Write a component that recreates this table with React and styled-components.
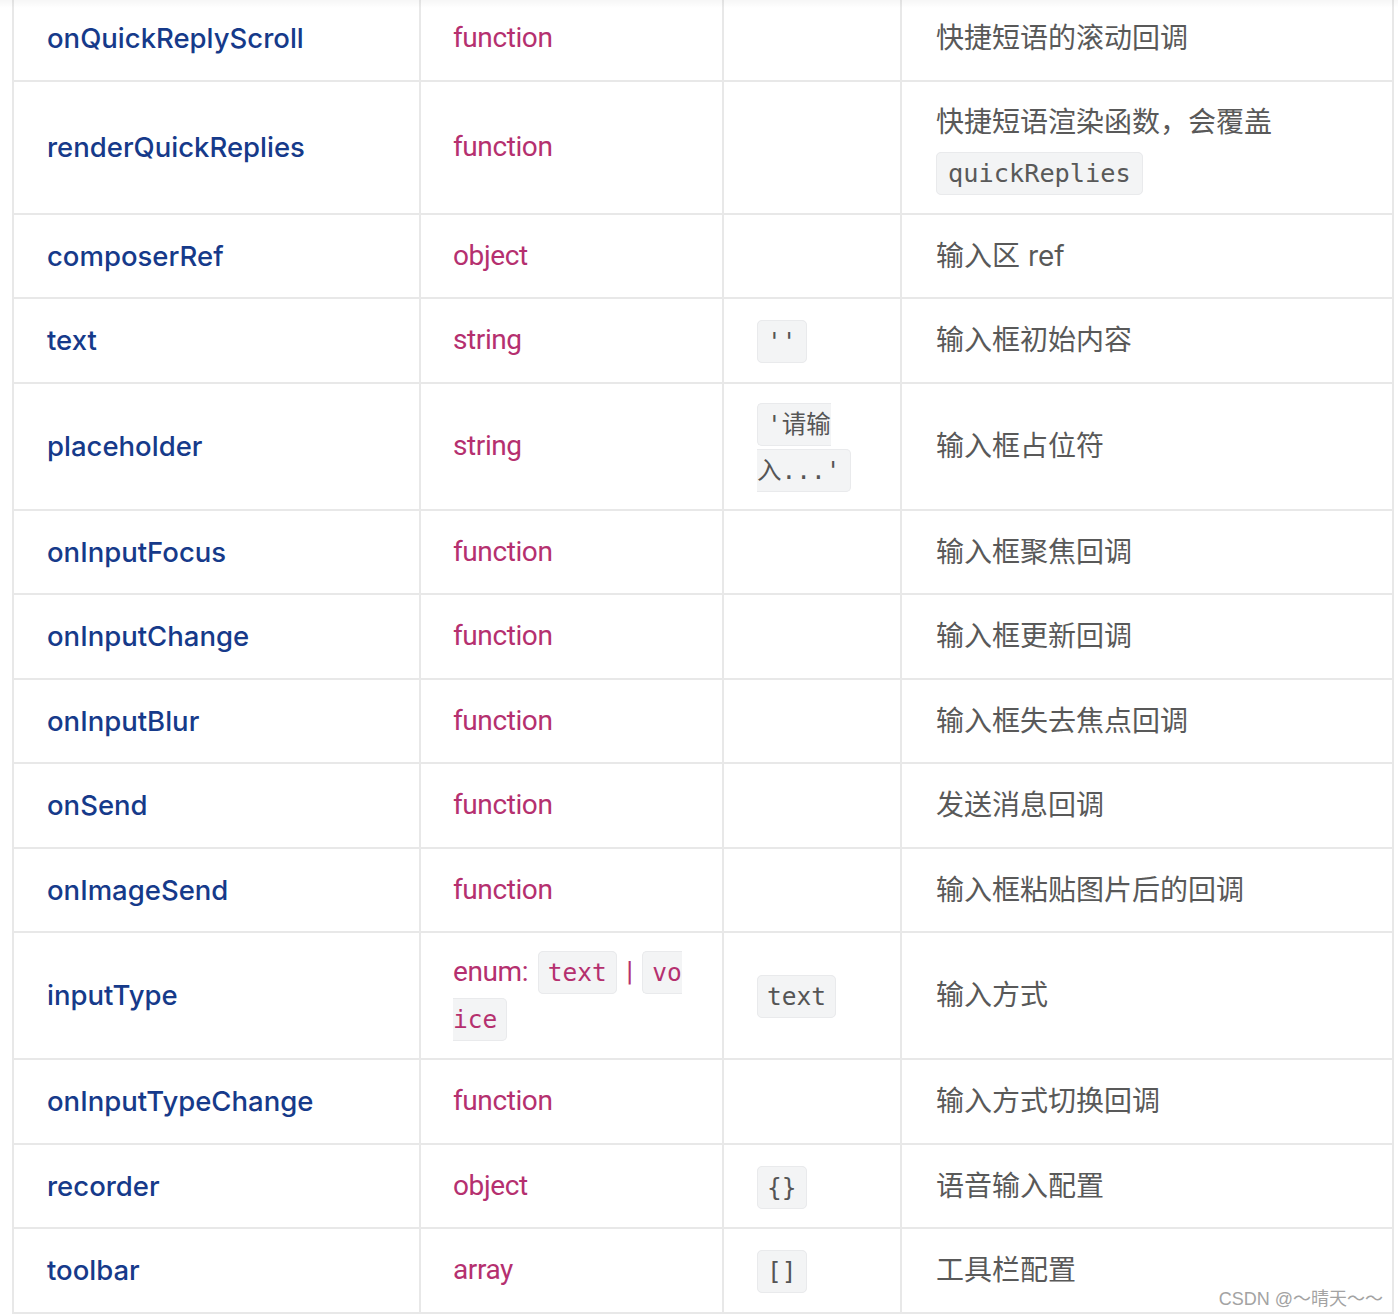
import React from 'react'
import styled, { createGlobalStyle } from 'styled-components'

const GlobalStyle = createGlobalStyle`
    html, body {
        margin: 0;
        padding: 0;
        background: #ffffff;
    }
    body {
        font-family: Inter, "Noto Sans CJK SC", sans-serif;
    }
`

// built on render, the styled parts are declared further down
const getRows = () => [
    { name: 'onQuickReplyScroll', type: 'function', desc: '快捷短语的滚动回调' },
    {
        name: 'renderQuickReplies',
        type: 'function',
        desc: <>快捷短语渲染函数，会覆盖 <Code>quickReplies</Code></>,
        tall: true,
    },
    { name: 'composerRef', type: 'object', desc: '输入区 ref' },
    { name: 'text', type: 'string', def: "''", desc: '输入框初始内容' },
    { name: 'placeholder', type: 'string', def: "'请输入...'", desc: '输入框占位符' },
    { name: 'onInputFocus', type: 'function', desc: '输入框聚焦回调' },
    { name: 'onInputChange', type: 'function', desc: '输入框更新回调' },
    { name: 'onInputBlur', type: 'function', desc: '输入框失去焦点回调' },
    { name: 'onSend', type: 'function', desc: '发送消息回调' },
    { name: 'onImageSend', type: 'function', desc: '输入框粘贴图片后的回调' },
    {
        name: 'inputType',
        type: <>enum: <Code>text</Code> | <Code>voice</Code></>,
        def: 'text',
        desc: '输入方式',
    },
    { name: 'onInputTypeChange', type: 'function', desc: '输入方式切换回调' },
    { name: 'recorder', type: 'object', def: '{}', desc: '语音输入配置' },
    { name: 'toolbar', type: 'array', def: '[]', desc: '工具栏配置' },
]

const App = () => {
  const rows = getRows()

  return (
    <Page>
        <GlobalStyle />
        <TopShade />
        <Table>
            <colgroup>
                <Col $w={407} />
                <Col $w={303} />
                <Col $w={178} />
                <Col $w={492} />
            </colgroup>
            <tbody>
                {rows.map((row) => (
                    <Row key={row.name}>
                        <NameCell>{row.name}</NameCell>
                        <TypeCell>{row.type}</TypeCell>
                        <DefaultCell>{row.def && <Code>{row.def}</Code>}</DefaultCell>
                        <DescCell $tall={row.tall}>{row.desc}</DescCell>
                    </Row>
                ))}
            </tbody>
        </Table>
        <Watermark>CSDN @～晴天～～</Watermark>
    </Page>
  )
}

export default App

const Page = styled.div`
    position: relative;
    width: 1398px;
    height: 1316px;
    overflow: hidden;
    background: #ffffff;
`
const TopShade = styled.div`
    position: absolute;
    top: 0;
    left: 0;
    right: 0;
    height: 8px;
    background: linear-gradient(rgba(0, 0, 0, 0.035), rgba(0, 0, 0, 0));
    pointer-events: none;
    z-index: 2;
`
const Table = styled.table`
    margin: -5px 0 0 12px;
    width: 1380px;
    table-layout: fixed;
    border-collapse: collapse;
    border: 2px solid #e8e8e8;
    font-size: 28px;
    line-height: 46.5px;
`
const Col = styled.col`
    width: ${(p) => p.$w}px;
`
const Row = styled.tr`
    height: 84.5px;
`
const Code = styled.code`
    font-family: "DejaVu Sans Mono", "Noto Sans CJK SC", monospace;
    font-size: 24.5px;
    line-height: 1;
    padding: 6px 9px;
    background: #f3f4f5;
    border: 1px solid #e9eaec;
    border-radius: 5px;
`
const Cell = styled.td`
    border: 2px solid #e8e8e8;
    padding: 16px 33px;
    vertical-align: middle;
    background: #ffffff;
`
const NameCell = styled(Cell)`
    color: #163a8a;
    font-size: 27.5px;
    font-weight: 500;
`
const TypeCell = styled(Cell)`
    padding-left: 32px;
    color: #b5306f;
    font-family: Roboto, "Noto Sans CJK SC", sans-serif;
    letter-spacing: -0.4px;
    word-spacing: 3px;
    word-break: break-all;

    ${Code} {
        letter-spacing: 0;
        word-spacing: 0;
    }
`
const DefaultCell = styled(Cell)`
    color: #555555;
    word-break: break-all;
`
const DescCell = styled(Cell)`
    color: #595959;
    padding-left: 34px;
    padding-top: ${(p) => (p.$tall ? '15px' : '16px')};
    padding-bottom: ${(p) => (p.$tall ? '15px' : '16px')};
    line-height: ${(p) => (p.$tall ? '50.5px' : '46.5px')};

    ${Code} {
        font-size: 25.3px;
        padding: 6px 11px;
    }
`
const Watermark = styled.div`
    position: absolute;
    right: 15px;
    top: 1284px;
    font-family: "Liberation Sans", "Noto Sans CJK SC", sans-serif;
    font-size: 18px;
    color: #a3a3a3;
    text-shadow: 0 0 2px #ffffff, 0 0 2px #ffffff;
    z-index: 3;
`
